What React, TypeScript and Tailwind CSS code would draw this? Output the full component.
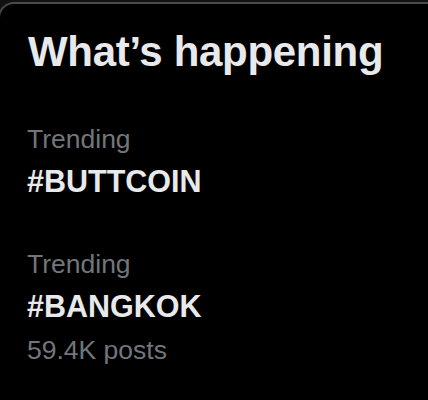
import React from "react";

const font = { fontFamily: '"Liberation Sans", Arial, sans-serif' };

function Item({ title, count }: { title: string; count?: string }) {
  return (
    <div className="pl-[27px] pt-6 pb-[23px]">
      <div className="text-[26.5px] leading-[32px] text-[#71767b]">Trending</div>
      <div className="mt-[6px] text-[30.5px] leading-[40px] font-bold text-[#e7e9ea]">{title}</div>
      {count && (
        <div className="mt-2 text-[26.5px] leading-[32px] text-[#71767b]">{count}</div>
      )}
    </div>
  );
}

export default function App() {
  return (
    <div className="w-[428px] h-[400px] overflow-hidden bg-[#111111] pt-[2px]" style={font}>
      <div className="ml-[-2px] w-[440px] h-[420px] bg-black border-t-2 border-l-2 border-[#4a4a4a] rounded-tl-2xl">
        <div className="pl-[28px] pt-6 pb-[23px]">
          <h2 className="text-[42px] leading-[48px] font-bold tracking-[-0.3px] text-[#e7e9ea]">
            What’s happening
          </h2>
        </div>
        <Item title="#BUTTCOIN" />
        <Item title="#BANGKOK" count="59.4K posts" />
      </div>
    </div>
  );
}
